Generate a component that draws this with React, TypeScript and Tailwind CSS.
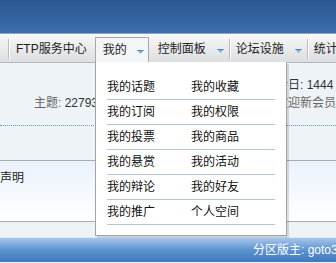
import React from 'react';

const Arrow = () => (
  <svg width="7" height="4" viewBox="0 0 7 4" className="block">
    <path d="M0 0 H7 L3.5 4 Z" fill="#7fb0dc" />
    <path d="M0.5 0.5 H6.5" stroke="#4d86bd" strokeWidth="1" />
  </svg>
);

const Sep = () => (
  <div className="flex h-[20px] shrink-0">
    <div className="w-px bg-[#b9bcc0]" />
    <div className="w-px bg-white" />
  </div>
);

const menu = [
  ['我的话题', '我的收藏'],
  ['我的订阅', '我的权限'],
  ['我的投票', '我的商品'],
  ['我的悬赏', '我的活动'],
  ['我的辩论', '我的好友'],
  ['我的推广', '个人空间'],
];

export default function App() {
  return (
    <div className="relative w-[336px] h-[263px] overflow-hidden whitespace-nowrap bg-[#eef3f8] text-[12px] font-['Liberation_Sans','Noto_Sans_CJK_SC',sans-serif]">
      {/* top blue header */}
      <div className="h-[33px] bg-gradient-to-b from-[#2a5690] to-[#3d70ac]" />
      <div className="h-px bg-[#7fa4cf]" />
      <div className="h-px bg-white" />

      {/* nav */}
      <div className="h-[28px] flex items-center bg-gradient-to-b from-[#f7f7f7] to-[#dcdee1] border-b border-[#b4b8bd] text-[#222]">
        <div className="w-[8px] shrink-0" />
        <Sep />
        <div className="shrink-0 pl-[6px] pr-[8px] leading-none">FTP服务中心</div>
        <div className="shrink-0 self-end h-[25px] w-[54px] flex items-center bg-[#f4f5f6] border border-b-0 border-[#a6a8ab] pl-[7px] relative z-20">
          <span className="leading-none">我的</span>
          <span className="ml-[10px] mt-[4px]"><Arrow /></span>
        </div>
        <div className="shrink-0 pl-[9px] leading-none">控制面板</div>
        <span className="shrink-0 ml-[11px] mt-[4px]"><Arrow /></span>
        <div className="w-[5px] shrink-0" />
        <Sep />
        <div className="shrink-0 pl-[5px] leading-none">论坛设施</div>
        <span className="shrink-0 ml-[11px] mt-[4px]"><Arrow /></span>
        <div className="w-[5px] shrink-0" />
        <Sep />
        <div className="shrink-0 pl-[5px] leading-none">统计</div>
      </div>

      {/* row 1 */}
      <div className="h-[98px] border-b border-[#a9abae] flex flex-col">
        <div className="flex h-[62px]">
          <div className="shrink-0 w-[276px] pl-[34px] pt-[34px] text-[#666] leading-none">
            主题: <span className="text-[#333]">22793</span>
          </div>
          <div className="shrink-0 pt-[16px] leading-none">
            <div className="text-[#333]">今日: 1444</div>
            <div className="mt-[6px] text-[#666]">欢迎新会员</div>
          </div>
        </div>
        <div className="border-b border-dotted border-[#6f94bd]" />
      </div>

      {/* row 2 */}
      <div className="h-[61px] border-b border-[#a9abae] bg-gradient-to-b from-[#eaf2fb] to-white pt-[11px] text-[#222] leading-none">
        声明
      </div>

      {/* row 3 */}
      <div className="h-[15px]" />

      {/* bottom bar */}
      <div className="h-px bg-[#dfe8f2]" />
      <div className="h-[24px] bg-gradient-to-b from-[#a6c6ea] via-[#5d93d0] to-[#3f78bb] text-white flex items-center pl-[253px] leading-none">
        分区版主: goto3
      </div>

      {/* dropdown */}
      <div className="absolute left-[95px] top-[62px] w-[192px] h-[174px] bg-white border border-t-0 border-[#a0a2a5] shadow-[2px_2px_0_rgba(0,0,0,0.12)] z-10 pl-[11px] pr-[11px] pt-[13px] text-[#111]">
        {menu.map((row) => (
          <div key={row[0]} className="h-[25px] flex items-start border-b border-[#b5c6d6] pt-[6px] leading-none">
            <span className="w-[84px]">{row[0]}</span>
            <span>{row[1]}</span>
          </div>
        ))}
      </div>
    </div>
  );
}
